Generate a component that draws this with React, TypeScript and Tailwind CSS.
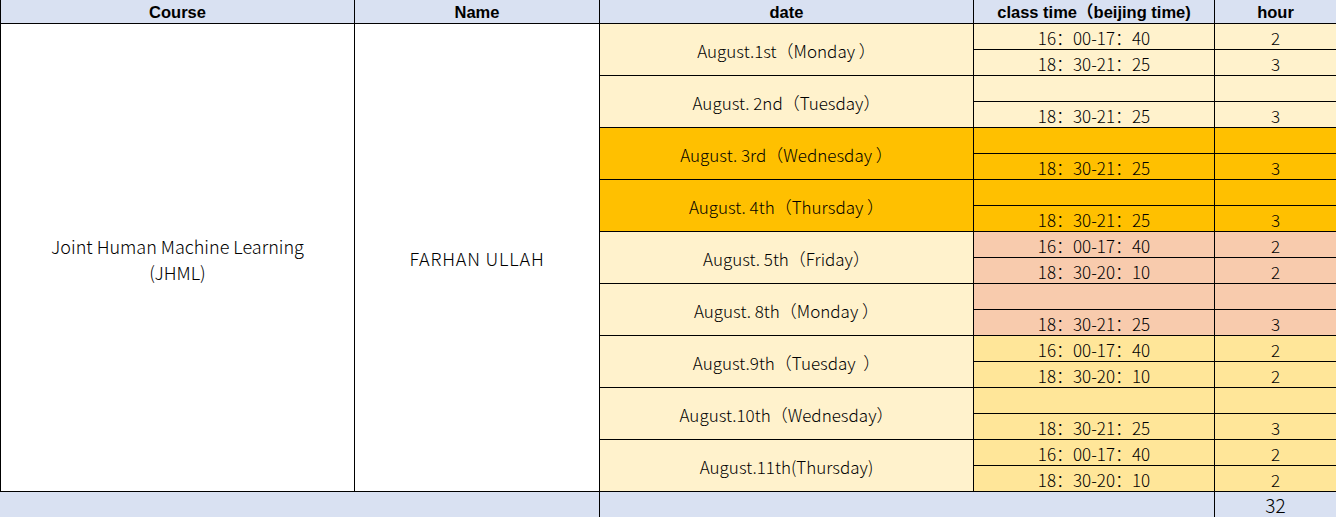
import React from 'react'

type Tone = 'light' | 'orange' | 'peach' | 'yellow'

const toneBg: Record<Tone, string> = {
  light: 'bg-[#fff2cc]',
  orange: 'bg-[#ffc000]',
  peach: 'bg-[#f8cbad]',
  yellow: 'bg-[#ffe699]',
}

interface DayRow {
  date: string
  dateTone: Tone
  slotTone: Tone
  slots: [string, string][]
}

const days: DayRow[] = [
  { date: 'August.1st（Monday ）', dateTone: 'light', slotTone: 'light', slots: [['16：00-17：40', '2'], ['18：30-21：25', '3']] },
  { date: 'August. 2nd（Tuesday）', dateTone: 'light', slotTone: 'light', slots: [['', ''], ['18：30-21：25', '3']] },
  { date: 'August. 3rd（Wednesday ）', dateTone: 'orange', slotTone: 'orange', slots: [['', ''], ['18：30-21：25', '3']] },
  { date: 'August. 4th（Thursday ）', dateTone: 'orange', slotTone: 'orange', slots: [['', ''], ['18：30-21：25', '3']] },
  { date: 'August. 5th（Friday）', dateTone: 'light', slotTone: 'peach', slots: [['16：00-17：40', '2'], ['18：30-20：10', '2']] },
  { date: 'August. 8th（Monday ）', dateTone: 'light', slotTone: 'peach', slots: [['', ''], ['18：30-21：25', '3']] },
  { date: 'August.9th（Tuesday  ）', dateTone: 'light', slotTone: 'yellow', slots: [['16：00-17：40', '2'], ['18：30-20：10', '2']] },
  { date: 'August.10th（Wednesday）', dateTone: 'light', slotTone: 'yellow', slots: [['', ''], ['18：30-21：25', '3']] },
  { date: 'August.11th(Thursday)', dateTone: 'light', slotTone: 'yellow', slots: [['16：00-17：40', '2'], ['18：30-20：10', '2']] },
]

const headers = ['Course', 'Name', 'date', 'class time（beijing time)', 'hour']

export default function App() {
  return (
    <div className="w-[1336px] h-[517px] overflow-hidden bg-white">
      <div className="grid grid-cols-[355px_245px_374px_241px_121px] grid-rows-[24px_repeat(18,26px)_25px] font-['Noto_Sans_CJK_SC',sans-serif] font-light text-[16px] text-black">
        {/* header */}
        {headers.map((h, i) => (
          <div
            key={h}
            className={`flex items-center justify-center pt-[2px] bg-[#d9e1f2] border-b border-black font-['Liberation_Sans','Noto_Sans_CJK_SC',sans-serif] font-bold text-[16.5px] ${
              i === 0 ? 'border-l' : ''
            } ${i < 4 ? 'border-r' : ''}`}
          >
            {h}
          </div>
        ))}

        {/* merged course + name */}
        <div className="row-span-18 col-start-1 flex flex-col items-center justify-center text-[18px] leading-[26px] border-l border-r border-b border-black pt-[2px]">
          <span>Joint Human Machine Learning</span>
          <span>(JHML)</span>
        </div>
        <div className="row-span-18 col-start-2 flex items-center justify-center text-[18px] tracking-[0.8px] border-r border-b border-black pt-[2px]">
          FARHAN ULLAH
        </div>

        {days.map((d) => (
          <React.Fragment key={d.date}>
            <div
              className={`row-span-2 col-start-3 flex items-center justify-center pt-[3px] text-[17px] whitespace-pre border-r border-b border-black ${toneBg[d.dateTone]}`}
            >
              {d.date}
            </div>
            {d.slots.map(([time, hour], j) => (
              <React.Fragment key={j}>
                <div
                  className={`col-start-4 flex items-end justify-center leading-[22px] text-[17px] border-r border-b border-black ${toneBg[d.slotTone]}`}
                >
                  {time}
                </div>
                <div
                  className={`col-start-5 flex items-end justify-center leading-[22px] text-[17px] border-b border-black ${toneBg[d.slotTone]}`}
                >
                  {hour}
                </div>
              </React.Fragment>
            ))}
          </React.Fragment>
        ))}

        {/* totals */}
        <div className="col-span-2 bg-[#d9e1f2] border-r border-black" />
        <div className="col-span-2 bg-[#d9e1f2] border-r border-black" />
        <div className="flex items-end justify-center bg-[#d9e1f2] text-[19px] leading-[24px]">32</div>
      </div>
    </div>
  )
}
